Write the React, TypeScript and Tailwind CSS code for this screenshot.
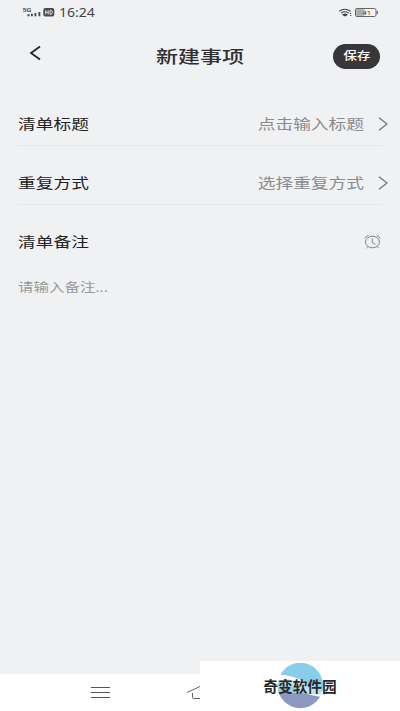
import React from "react";

function StatusBar() {
  return (
    <header className="flex h-[25px] items-start justify-between pl-[22px] pr-[20px]">
      <div className="flex items-start">
        <svg className="mt-[6px]" width="34" height="13" viewBox="0 0 34 13">
          <text x="0.5" y="5.6" fontSize="6" fontWeight="600" fontFamily="Roboto, sans-serif" fill="#444" textLength="9" lengthAdjust="spacingAndGlyphs">5G</text>
          <path d="M5.5 8.2h2v2h-2zM9 7.7h1.8v2.5H9zM12.5 7h1.8v3.2h-1.8zM16.5 6.1h1.8v4.1h-1.8z" fill="#444" />
          <rect x="21.3" y="2" width="11" height="8.6" rx="2" fill="#4a4a4a" />
          <path d="M23.7 4.2v4.2M26.2 4.2v4.2M23.7 6.3h2.5M28 4.3v4h.8c2 0 2-4 0-4z" stroke="#eee" strokeWidth="0.9" fill="none" />
        </svg>
        <span className="ml-[2.5px] mt-[4px] origin-left scale-x-[1.2] text-[11.7px] leading-[16px] text-[#444]">16:24</span>
      </div>
      <svg className="mt-[6px]" width="42" height="13" viewBox="0 0 42 13">
        <g fill="none" stroke="#444" strokeWidth="1.1">
          <path d="M1.2 5.2Q7 1.2 12.5 5.2" />
          <path d="M3.2 7Q7 4.4 10.6 7" />
          <path d="M5 8.7Q7 7.4 9 8.7L7 9.8z" fill="#444" />
        </g>
        <path d="M12 7h1.2v1H12zM12 9h1.2v1H12z" fill="#444" />
        <rect x="17.5" y="2.5" width="20.5" height="8" rx="1.5" fill="#f5f5f6" stroke="#666" />
        <rect x="18.2" y="3.2" width="8.3" height="6.6" fill="#aaa" />
        <path d="M38.7 5h1.2v3h-1.2z" fill="#666" />
        <text x="24.5" y="8.8" fontSize="6" fontFamily="Roboto, sans-serif" fill="#444" textLength="8.5" lengthAdjust="spacingAndGlyphs">41</text>
      </svg>
    </header>
  );
}

function FieldRow({ label, hint }: { label: string; hint: string }) {
  return (
    <div className="flex h-[59px] items-center pl-[18px] pr-3">
      <span className="w-[58px] origin-left scale-x-[1.265] whitespace-nowrap text-[14px] leading-5 text-[#222]">{label}</span>
      <span className="ml-auto origin-right scale-x-[1.265] whitespace-nowrap text-[14px] leading-5 text-[#8b8b8d]">{hint}</span>
      <svg className="ml-[14px]" width="10" height="14" viewBox="0 0 10 14">
        <path d="M1 .8L9 7L1 13.2" fill="none" stroke="#77777b" strokeWidth="1.4" />
      </svg>
    </div>
  );
}

function Divider() {
  return <div className="-mt-[8px] mb-[7px] ml-[18px] mr-[18px] h-px bg-[#e6e7e9]" />;
}

function Watermark() {
  return (
    <div className="absolute bottom-0 right-0 flex h-[50px] w-[200px] items-center justify-center bg-white">
      <svg className="absolute left-[77px] top-[2px]" width="48" height="48" viewBox="0 0 48 48">
        <defs>
          <clipPath id="disc">
            <circle cx="23.3" cy="22.5" r="22.7" />
          </clipPath>
        </defs>
        <g clipPath="url(#disc)">
          <path d="M0 0H48V30C38 27 26 12 0 11.5Z" fill="#89cdea" />
          <path d="M0 20C17 20 22 33 48 34V48H0Z" fill="#8c98bf" />
          <path d="M0 18L10 16L34 21L48 27V32L32 31L0 29Z" fill="#a5dcf0" opacity="0.75" />
        </g>
      </svg>
      <span className="relative whitespace-nowrap text-[14.7px] font-bold leading-5 text-[#282828]">奇变软件园</span>
    </div>
  );
}

export default function App() {
  return (
    <div className="relative flex h-[711px] w-[400px] flex-col overflow-hidden bg-[#f0f1f3] font-['Noto_Sans','Noto_Sans_CJK_SC',sans-serif]">
      <StatusBar />
      <div className="grid h-[62px] grid-cols-[80px_1fr_80px] items-center">
        <svg className="mb-[7px] ml-[29px]" width="13" height="16" viewBox="0 0 13 16">
          <path d="M11 1.5L2 8L11 14.5" fill="none" stroke="#242426" strokeWidth="1.8" />
        </svg>
        <h1 className="origin-center scale-x-[1.25] text-center text-[17.6px] font-medium leading-6 text-[#303032]">新建事项</h1>
        <button className="ml-[13px] flex h-[25px] w-[47px] items-center justify-center rounded-full bg-[#373739] text-white">
          <span className="scale-x-[1.22] whitespace-nowrap text-[11px] font-medium leading-4">保存</span>
        </button>
      </div>
      <main className="flex-1 pt-[7px]">
        <FieldRow label="清单标题" hint="点击输入标题" />
        <Divider />
        <FieldRow label="重复方式" hint="选择重复方式" />
        <Divider />
        <div className="flex h-[60px] items-center justify-between pl-[18px] pr-[19px]">
          <span className="origin-left scale-x-[1.265] text-[14px] leading-5 text-[#222]">清单备注</span>
          <svg width="17" height="16" viewBox="0 0 17 16" fill="none" stroke="#858589" strokeWidth="1">
            <ellipse cx="8.5" cy="8" rx="7" ry="5.8" />
            <path d="M8.3 4.4v4l3 2M1 4.3Q1.5 2 4.4 1.6M16 4.3Q15.5 2 12.6 1.6M4 12.5l-1.7 1.7M13 12.5l1.7 1.7" />
          </svg>
        </div>
        <p className="mt-[6px] origin-left scale-x-[1.25] pl-[14.4px] text-[12.4px] leading-5 text-[#99999b]">请输入备注...</p>
      </main>
      <nav className="flex h-[37px] items-center bg-white pl-[91px]">
        <svg width="19" height="13" viewBox="0 0 19 13">
          <path d="M0 1.5h19M0 6.5h19M0 11.5h19" stroke="#555" />
        </svg>
        <svg className="ml-[77px]" width="28" height="16" viewBox="0 0 28 16">
          <path d="M0 7.5L14 1L28 7.5M5.5 8v4.5q0 1 1 1h15q1 0 1-1V8" fill="none" stroke="#666" />
        </svg>
      </nav>
      <Watermark />
    </div>
  );
}
